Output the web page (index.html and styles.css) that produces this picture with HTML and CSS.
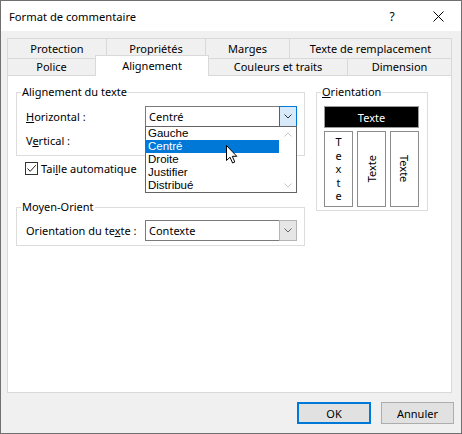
FILE: index.html
```html
<!DOCTYPE html>
<html lang="fr">
<head>
<meta charset="utf-8">
<title>Format de commentaire</title>
<link rel="stylesheet" href="styles.css">
</head>
<body>
<div class="window">
  <div class="titlebar">
    <span class="title">Format de commentaire</span>
    <span class="tb-btn help">?</span>
    <span class="tb-btn close">
      <svg width="11" height="11" viewBox="0 0 11 11"><path d="M0.5 0.5 L10.5 10.5 M10.5 0.5 L0.5 10.5" stroke="#000" stroke-width="1" fill="none"/></svg>
    </span>
  </div>
  <div class="content">
    <div class="tabs">
      <div class="tabrow back">
        <div class="tab w-prot">Protection</div>
        <div class="tab w-prop">Propriétés</div>
        <div class="tab w-marg">Marges</div>
        <div class="tab w-texte last">Texte de remplacement</div>
      </div>
      <div class="tabrow front">
        <div class="tab w-pol">Police</div>
        <div class="tab w-align sel">Alignement</div>
        <div class="tab w-coul">Couleurs et traits</div>
        <div class="tab w-dim last">Dimension</div>
      </div>
    </div>
    <div class="panel">
      <div class="col-left">
        <fieldset class="group g-align">
          <legend>Alignement du texte</legend>
          <div class="inner">
            <div class="field">
              <span class="lbl"><u>H</u>orizontal :</span>
              <div class="combo focused">
                <span class="val">Centré</span>
                <span class="cbtn">
                  <svg width="8" height="5" viewBox="0 0 8 5"><path d="M0.5 0.5 L4 4 L7.5 0.5" stroke="#333" fill="none"/></svg>
                </span>
                <div class="droplist">
                  <div class="items">
                    <div class="item">Gauche</div>
                    <div class="item active">Centré</div>
                    <div class="item">Droite</div>
                    <div class="item">Justifier</div>
                    <div class="item">Distribué</div>
                  </div>
                  <div class="sbar">
                    <svg width="8" height="5" viewBox="0 0 8 5"><path d="M0.5 4.5 L4 1 L7.5 4.5" stroke="#c4c4c4" fill="none"/></svg>
                    <svg width="8" height="5" viewBox="0 0 8 5"><path d="M0.5 0.5 L4 4 L7.5 0.5" stroke="#c4c4c4" fill="none"/></svg>
                  </div>
                  <svg class="cursor" width="12" height="19" viewBox="0 0 12 19"><path d="M0.5 0.5 L0.5 15.5 L4 12.2 L6.6 18 L8.8 17 L6.3 11.3 L10.8 11.3 Z" fill="#fff" stroke="#000" stroke-width="1" stroke-linejoin="miter"/></svg>
                </div>
              </div>
            </div>
            <div class="field">
              <span class="lbl">V<u>e</u>rtical :</span>
              <div class="combo">
                <span class="val"></span>
                <span class="cbtn plain"></span>
              </div>
            </div>
          </div>
        </fieldset>
        <label class="check">
          <span class="box">
            <svg width="11" height="11" viewBox="0 0 11 11"><path d="M1.5 5.5 L4.2 8.3 L9.8 2.2" stroke="#222" stroke-width="1" fill="none"/></svg>
          </span>
          <span>Tai<u>l</u>le automatique</span>
        </label>
        <fieldset class="group g-mo">
          <legend>Moyen-Orient</legend>
          <div class="inner">
            <div class="field">
              <span class="lbl">Orientation du te<u>x</u>te :</span>
              <div class="combo">
                <span class="val">Contexte</span>
                <span class="cbtn gray">
                  <svg width="8" height="5" viewBox="0 0 8 5"><path d="M0.5 0.5 L4 4 L7.5 0.5" stroke="#666" fill="none"/></svg>
                </span>
              </div>
            </div>
          </div>
        </fieldset>
      </div>
      <fieldset class="group g-orient">
        <legend><u>O</u>rientation</legend>
        <div class="inner">
          <div class="black">Texte</div>
          <div class="vboxes">
            <div class="vbox stack"><span>T</span><span>e</span><span>x</span><span>t</span><span>e</span></div>
            <div class="vbox"><span class="rot-up">Texte</span></div>
            <div class="vbox"><span class="rot-down">Texte</span></div>
          </div>
        </div>
      </fieldset>
    </div>
  </div>
  <div class="buttons">
    <button class="btn default">OK</button>
    <button class="btn">Annuler</button>
  </div>
</div>
</body>
</html>
```
FILE: styles.css
```css
* { box-sizing: border-box; }
html, body { margin: 0; padding: 0; background: #fff; }
body {
  font-family: "Noto Sans", "Segoe UI", sans-serif;
  font-size: 11px;
  color: #000;
}
u { text-decoration: underline; text-underline-offset: 1px; }

.window {
  width: 462px;
  height: 434px;
  border: 1px solid #707070;
  background: #f0f0f0;
  display: flex;
  flex-direction: column;
}

.titlebar {
  height: 30px;
  background: #fff;
  display: flex;
  align-items: center;
  flex-shrink: 0;
}
.title { flex: 1; padding-left: 8px; font-size: 11.2px; }
.tb-btn {
  width: 46px;
  height: 30px;
  display: flex;
  align-items: center;
  justify-content: center;
}
.help { font-size: 12px; }

.content { padding: 7px 9px 0 6px; }

.tabs { width: 445px; }
.tabrow { display: flex; }
.tabrow.back { height: 20px; }
.tabrow.front { height: 17px; }
.tab {
  border-top: 1px solid #d9d9d9;
  border-left: 1px solid #d9d9d9;
  background: #f0f0f0;
  display: flex;
  align-items: center;
  justify-content: center;
}
.tabrow.front .tab { padding-bottom: 1px; }
.tab.last { border-right: 1px solid #d9d9d9; }
.w-prot { width: 99px; }
.w-prop { width: 99px; }
.w-marg { width: 84px; }
.w-texte { width: 163px; }
.w-pol { width: 88px; }
.w-align { width: 114px; }
.w-coul { width: 139px; }
.w-dim { width: 105px; }
.tab.sel {
  background: #fff;
  height: 21px;
  margin-top: -3px;
  margin-right: -1px;
  border-right: 1px solid #d9d9d9;
  position: relative;
  z-index: 1;
  padding-bottom: 3px;
}

.panel {
  height: 318px;
  width: 445px;
  background: #fff;
  border: 1px solid #d9d9d9;
  padding: 8px 0 0 8px;
  display: flex;
  align-items: flex-start;
  gap: 11px;
}
.col-left { width: 289px; display: flex; flex-direction: column; }

.group {
  margin: 0;
  border: 1px solid #dcdcdc;
  padding: 0 4px 4px 4px;
  min-width: 0;
}
.group legend {
  padding: 0 1px;
  line-height: 16px;
  height: 16px;
}
.group .inner { margin-left: 5px; }
.g-align .inner { padding-top: 6px; display: flex; flex-direction: column; gap: 3px; }
.g-mo { margin-top: 22px; }
.g-mo .inner { padding-top: 5px; }

.field { display: flex; align-items: center; height: 21px; }
.lbl { width: 119px; flex-shrink: 0; }

.combo {
  width: 152px;
  height: 21px;
  border: 1px solid #7a7a7a;
  background: #fff;
  display: flex;
  align-items: center;
  position: relative;
}
.combo .val { flex: 1; padding-left: 3px; }
.cbtn {
  width: 18px;
  align-self: stretch;
  margin: -1px -1px -1px 0;
  display: flex;
  align-items: center;
  justify-content: center;
}
.focused .cbtn { border: 1px solid #0078d7; background: #d8eaf9; }
.cbtn.gray { border: 1px solid #b5b5b5; background: #e6e6e6; }

.droplist {
  position: absolute;
  left: -1px;
  top: 19px;
  width: 152px;
  border: 1px solid #646464;
  background: #fff;
  display: flex;
  z-index: 5;
}
.items { flex: 1; }
.item {
  height: 13px;
  line-height: 13px;
  padding-left: 2px;
  font-family: "Liberation Sans", Arial, sans-serif;
  font-size: 11.5px;
}
.item.active { background: #0078d7; color: #fff; }
.sbar {
  width: 17px;
  display: flex;
  flex-direction: column;
  justify-content: space-between;
  align-items: center;
  padding: 5px 0 4px;
}
.cursor { position: absolute; left: 80px; top: 18px; }

.check {
  display: flex;
  align-items: center;
  height: 17px;
  margin: 4px 0 0 9px;
}
.check .box {
  width: 13px;
  height: 13px;
  border: 1px solid #333;
  background: #fff;
  margin-right: 3px;
  display: flex;
}

.g-orient { width: 112px; height: 127px; }
.g-orient .inner { margin-left: 3px; padding-top: 6px; }
.black {
  width: 95px;
  height: 22px;
  background: #000;
  color: #fff;
  border: 1px solid #9a9a9a;
  display: flex;
  align-items: center;
  justify-content: center;
}
.vboxes { display: flex; gap: 4px; margin-top: 3px; }
.vbox {
  width: 29px;
  height: 76px;
  border: 1px solid #8c8c8c;
  display: flex;
  align-items: center;
  justify-content: center;
}
.stack { flex-direction: column; line-height: 13.5px; }
.rot-up { writing-mode: vertical-rl; transform: rotate(180deg); }
.rot-down { writing-mode: vertical-rl; }

.buttons {
  display: flex;
  justify-content: flex-end;
  gap: 10px;
  padding: 9px 7px 0 0;
}
.btn {
  font-family: inherit;
  font-size: 11px;
  color: #000;
  width: 73px;
  height: 22px;
  background: #e1e1e1;
  border: 1px solid #adadad;
  padding: 0;
  margin: 0;
}
.btn.default { width: 74px; border: 1px solid #0078d7; box-shadow: inset 0 0 0 1px #0078d7; }
```
